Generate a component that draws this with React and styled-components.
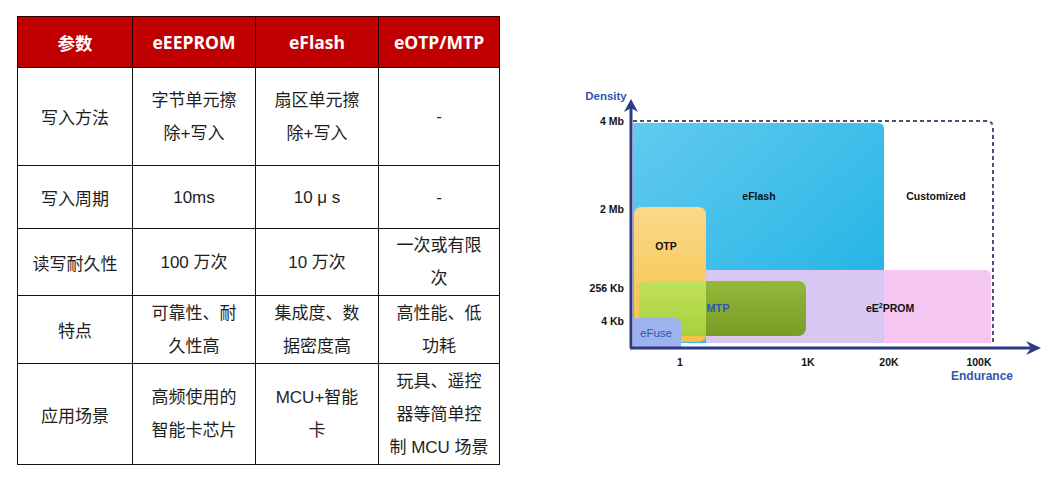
import React from "react";
import styled, { createGlobalStyle } from "styled-components";

const GlobalStyle = createGlobalStyle`
  html, body {
    margin: 0;
    padding: 0;
    background: #ffffff;
  }
`;

const rows = [
  { label: "写入方法", height: 98, cells: [["字节单元擦", "除+写入"], ["扇区单元擦", "除+写入"], ["-"]] },
  { label: "写入周期", height: 63, cells: [["10ms"], ["10 μ s"], ["-"]] },
  { label: "读写耐久性", height: 67, cells: [["100 万次"], ["10 万次"], ["一次或有限", "次"]] },
  { label: "特点", height: 68, cells: [["可靠性、耐", "久性高"], ["集成度、数", "据密度高"], ["高性能、低", "功耗"]] },
  { label: "应用场景", height: 101, cells: [["高频使用的", "智能卡芯片"], ["MCU+智能", "卡"], ["玩具、遥控", "器等简单控", "制 MCU 场景"]] },
];

const App = () => {
  return (
    <>
      <GlobalStyle />
      <Page>
        <Table>
          <colgroup>
            <col style={{ width: 115 }} />
            <col style={{ width: 123 }} />
            <col style={{ width: 123 }} />
            <col style={{ width: 121 }} />
          </colgroup>
          <thead>
            <tr>
              <HeadCell>参数</HeadCell>
              <HeadCell>eEEPROM</HeadCell>
              <HeadCell>eFlash</HeadCell>
              <HeadCell>eOTP/MTP</HeadCell>
            </tr>
          </thead>
          <tbody>
            {rows.map((row) => (
              <Row key={row.label} h={row.height}>
                <Cell>{row.label}</Cell>
                {row.cells.map((lines, i) => (
                  <Cell key={i}>
                    {lines.map((line, j) => (
                      <Line key={j}>{line}</Line>
                    ))}
                  </Cell>
                ))}
              </Row>
            ))}
          </tbody>
        </Table>
        <ChartWrap>
          <EnduranceChart />
        </ChartWrap>
      </Page>
    </>
  );
};

const EnduranceChart = () => (
  <svg width="470" height="300" viewBox="575 85 470 300">
    <defs>
      <linearGradient id="flash" x1="0" y1="0" x2="1" y2="1">
        <stop offset="0" stopColor="#62caf0" />
        <stop offset="1" stopColor="#1bb1e3" />
      </linearGradient>
      <linearGradient id="otp" x1="0" y1="0" x2="0" y2="1">
        <stop offset="0" stopColor="#fbd98a" />
        <stop offset="1" stopColor="#f6c143" />
      </linearGradient>
      <linearGradient id="mtp" x1="0" y1="0" x2="0" y2="1">
        <stop offset="0" stopColor="#93b83a" />
        <stop offset="1" stopColor="#7a9c25" />
      </linearGradient>
      <linearGradient id="mtpLight" x1="0" y1="0" x2="0" y2="1">
        <stop offset="0" stopColor="#c0e25c" />
        <stop offset="1" stopColor="#a8d03c" />
      </linearGradient>
      <clipPath id="otpZone">
        <rect x="630" y="270" width="75" height="80" />
      </clipPath>
    </defs>

    <path d="M632 121 H985 Q992 121 992 128 V344" fill="none" stroke="#4b5172" strokeWidth="2" strokeDasharray="4 3" />

    <path d="M632 270 H984 Q990 270 990 276 V343 H632 Z" fill="#f5c6f2" />
    <path d="M632 123 H877 Q883 123 883 129 V336 Q883 343 876 343 H632 Z" fill="url(#flash)" />
    <path d="M705 270 H883 V336 Q883 343 876 343 H705 Z" fill="#d8c6f3" />

    <path d="M641 207 H697 Q705 207 705 215 V334 Q705 342 697 342 H641 Q633 342 633 334 V215 Q633 207 641 207 Z" fill="url(#otp)" />

    <rect x="638" y="281" width="167" height="55" rx="8" fill="url(#mtp)" />
    <rect x="638" y="281" width="167" height="55" rx="8" fill="url(#mtpLight)" clipPath="url(#otpZone)" />

    <path d="M632 318 H673 Q680 318 680 325 V347 H632 Z" fill="#9db3ef" />

    <line x1="630" y1="348" x2="630" y2="106" stroke="#2c3b84" strokeWidth="3" />
    <path d="M630 99 L637 112 L630 108 L623 112 Z" fill="#2c3b84" />
    <line x1="629" y1="348" x2="1032" y2="348" stroke="#2c3b84" strokeWidth="3" />
    <path d="M1040 348 L1025 341 L1030 348 L1025 355 Z" fill="#2c3b84" />

    <g fontFamily="Liberation Sans, Arial, sans-serif" fontWeight="bold" fontSize="10.5" fill="#111">
      <text x="623" y="125" textAnchor="end">4 Mb</text>
      <text x="623" y="213" textAnchor="end">2 Mb</text>
      <text x="623" y="292" textAnchor="end">256 Kb</text>
      <text x="623" y="325" textAnchor="end">4 Kb</text>
      <text x="679" y="366" textAnchor="middle">1</text>
      <text x="807" y="366" textAnchor="middle">1K</text>
      <text x="888" y="366" textAnchor="middle">20K</text>
      <text x="978" y="366" textAnchor="middle">100K</text>
      <text x="758" y="200" textAnchor="middle">eFlash</text>
      <text x="935" y="200" textAnchor="middle">Customized</text>
      <text x="665" y="250" textAnchor="middle">OTP</text>
      <text x="889" y="312" textAnchor="middle">
        eE<tspan fontSize="7" dy="-4">2</tspan>
        <tspan dy="4">PROM</tspan>
      </text>
    </g>
    <g fontFamily="Liberation Sans, Arial, sans-serif" fontWeight="bold" fill="#2f58b4">
      <text x="717" y="312" fontSize="11" textAnchor="middle">MTP</text>
      <text x="655" y="337" fontSize="11.5" textAnchor="middle" fontWeight="normal">eFuse</text>
      <text x="605" y="100" fontSize="11.5" textAnchor="middle">Density</text>
      <text x="981" y="380" fontSize="12" textAnchor="middle">Endurance</text>
    </g>
  </svg>
);

const Page = styled.div`
  display: flex;
  align-items: flex-start;
  padding: 16px 0 0 17px;
  width: 1051px;
  height: 479px;
  box-sizing: border-box;
`;

const Table = styled.table`
  border-collapse: collapse;
  table-layout: fixed;
  width: 482px;
  font-family: "Liberation Sans", "Noto Sans CJK SC", sans-serif;
  color: #1e1e1e;
`;

const HeadCell = styled.th`
  height: 50px;
  background: #c00000;
  color: #ffffff;
  font-family: "Open Sans", "Noto Sans CJK SC", sans-serif;
  font-weight: 700;
  font-size: 17.5px;
  text-align: center;
  border: 1.5px solid #2a0000;
  padding: 0;
`;

const Row = styled.tr`
  height: ${(props) => props.h}px;
`;

const Cell = styled.td`
  border: 1.5px solid #111;
  text-align: center;
  vertical-align: middle;
  font-size: 17px;
  padding: 0;
`;

const Line = styled.div`
  line-height: 33px;
  white-space: nowrap;
`;

const ChartWrap = styled.div`
  margin: 69px 0 0 76px;
  line-height: 0;
`;

export default App;
